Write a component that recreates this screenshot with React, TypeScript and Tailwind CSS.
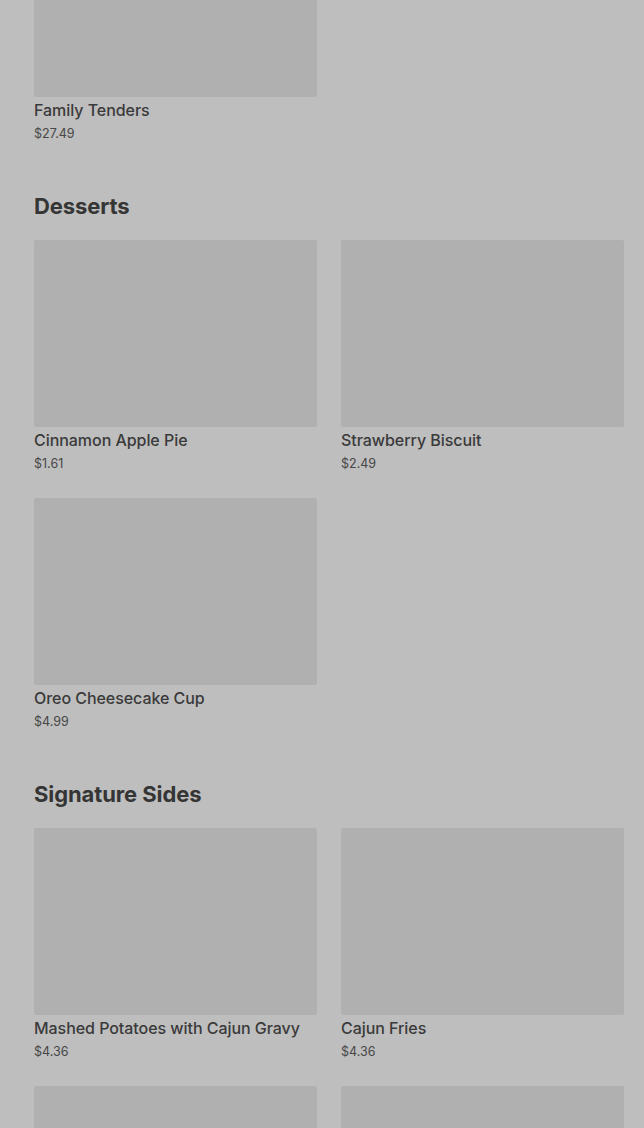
import React from "react";

type Item = { name: string; price: string };

function Card({ item }: { item: Item }) {
  return (
    <div className="flex flex-col">
      <div className="h-[187px] w-full rounded-[2px] bg-[#b0b0b0]" />
      <div className="mt-[1px] text-[16px] leading-[24px] font-medium text-[#3a3a3a] tracking-[-0.05px] whitespace-nowrap">{item.name}</div>
      <div className="mt-[2px] text-[12.5px] leading-[20px] text-[#474747]">{item.price}</div>
    </div>
  );
}

function Section({ title, items }: { title: string; items: Item[] }) {
  return (
    <div className="flex flex-col">
      <h2 className="h-[33px] text-[22px] leading-[33px] font-bold text-[#353535] tracking-[-0.1px]">{title}</h2>
      <div className="mt-[17px] grid grid-cols-2 gap-x-[24px] gap-y-[24px]">
        {items.map((it) => (
          <Card key={it.name} item={it} />
        ))}
      </div>
    </div>
  );
}

export default function App() {
  return (
    <div
      className="w-[644px] h-[1128px] overflow-hidden bg-[#bebebe]"
      style={{ fontFamily: "Inter, 'Noto Sans', sans-serif" }}
    >
      <div className="pl-[34px] pr-[20px] mt-[-90px] flex flex-col gap-[46px]">
        <div className="grid grid-cols-2 gap-x-[24px]">
          <Card item={{ name: "Family Tenders", price: "$27.49" }} />
        </div>
        <Section
          title="Desserts"
          items={[
            { name: "Cinnamon Apple Pie", price: "$1.61" },
            { name: "Strawberry Biscuit", price: "$2.49" },
            { name: "Oreo Cheesecake Cup", price: "$4.99" },
          ]}
        />
        <Section
          title="Signature Sides"
          items={[
            { name: "Mashed Potatoes with Cajun Gravy", price: "$4.36" },
            { name: "Cajun Fries", price: "$4.36" },
            { name: "Red Beans & Rice", price: "$4.36" },
            { name: "Biscuit", price: "$1.25" },
          ]}
        />
      </div>
    </div>
  );
}
